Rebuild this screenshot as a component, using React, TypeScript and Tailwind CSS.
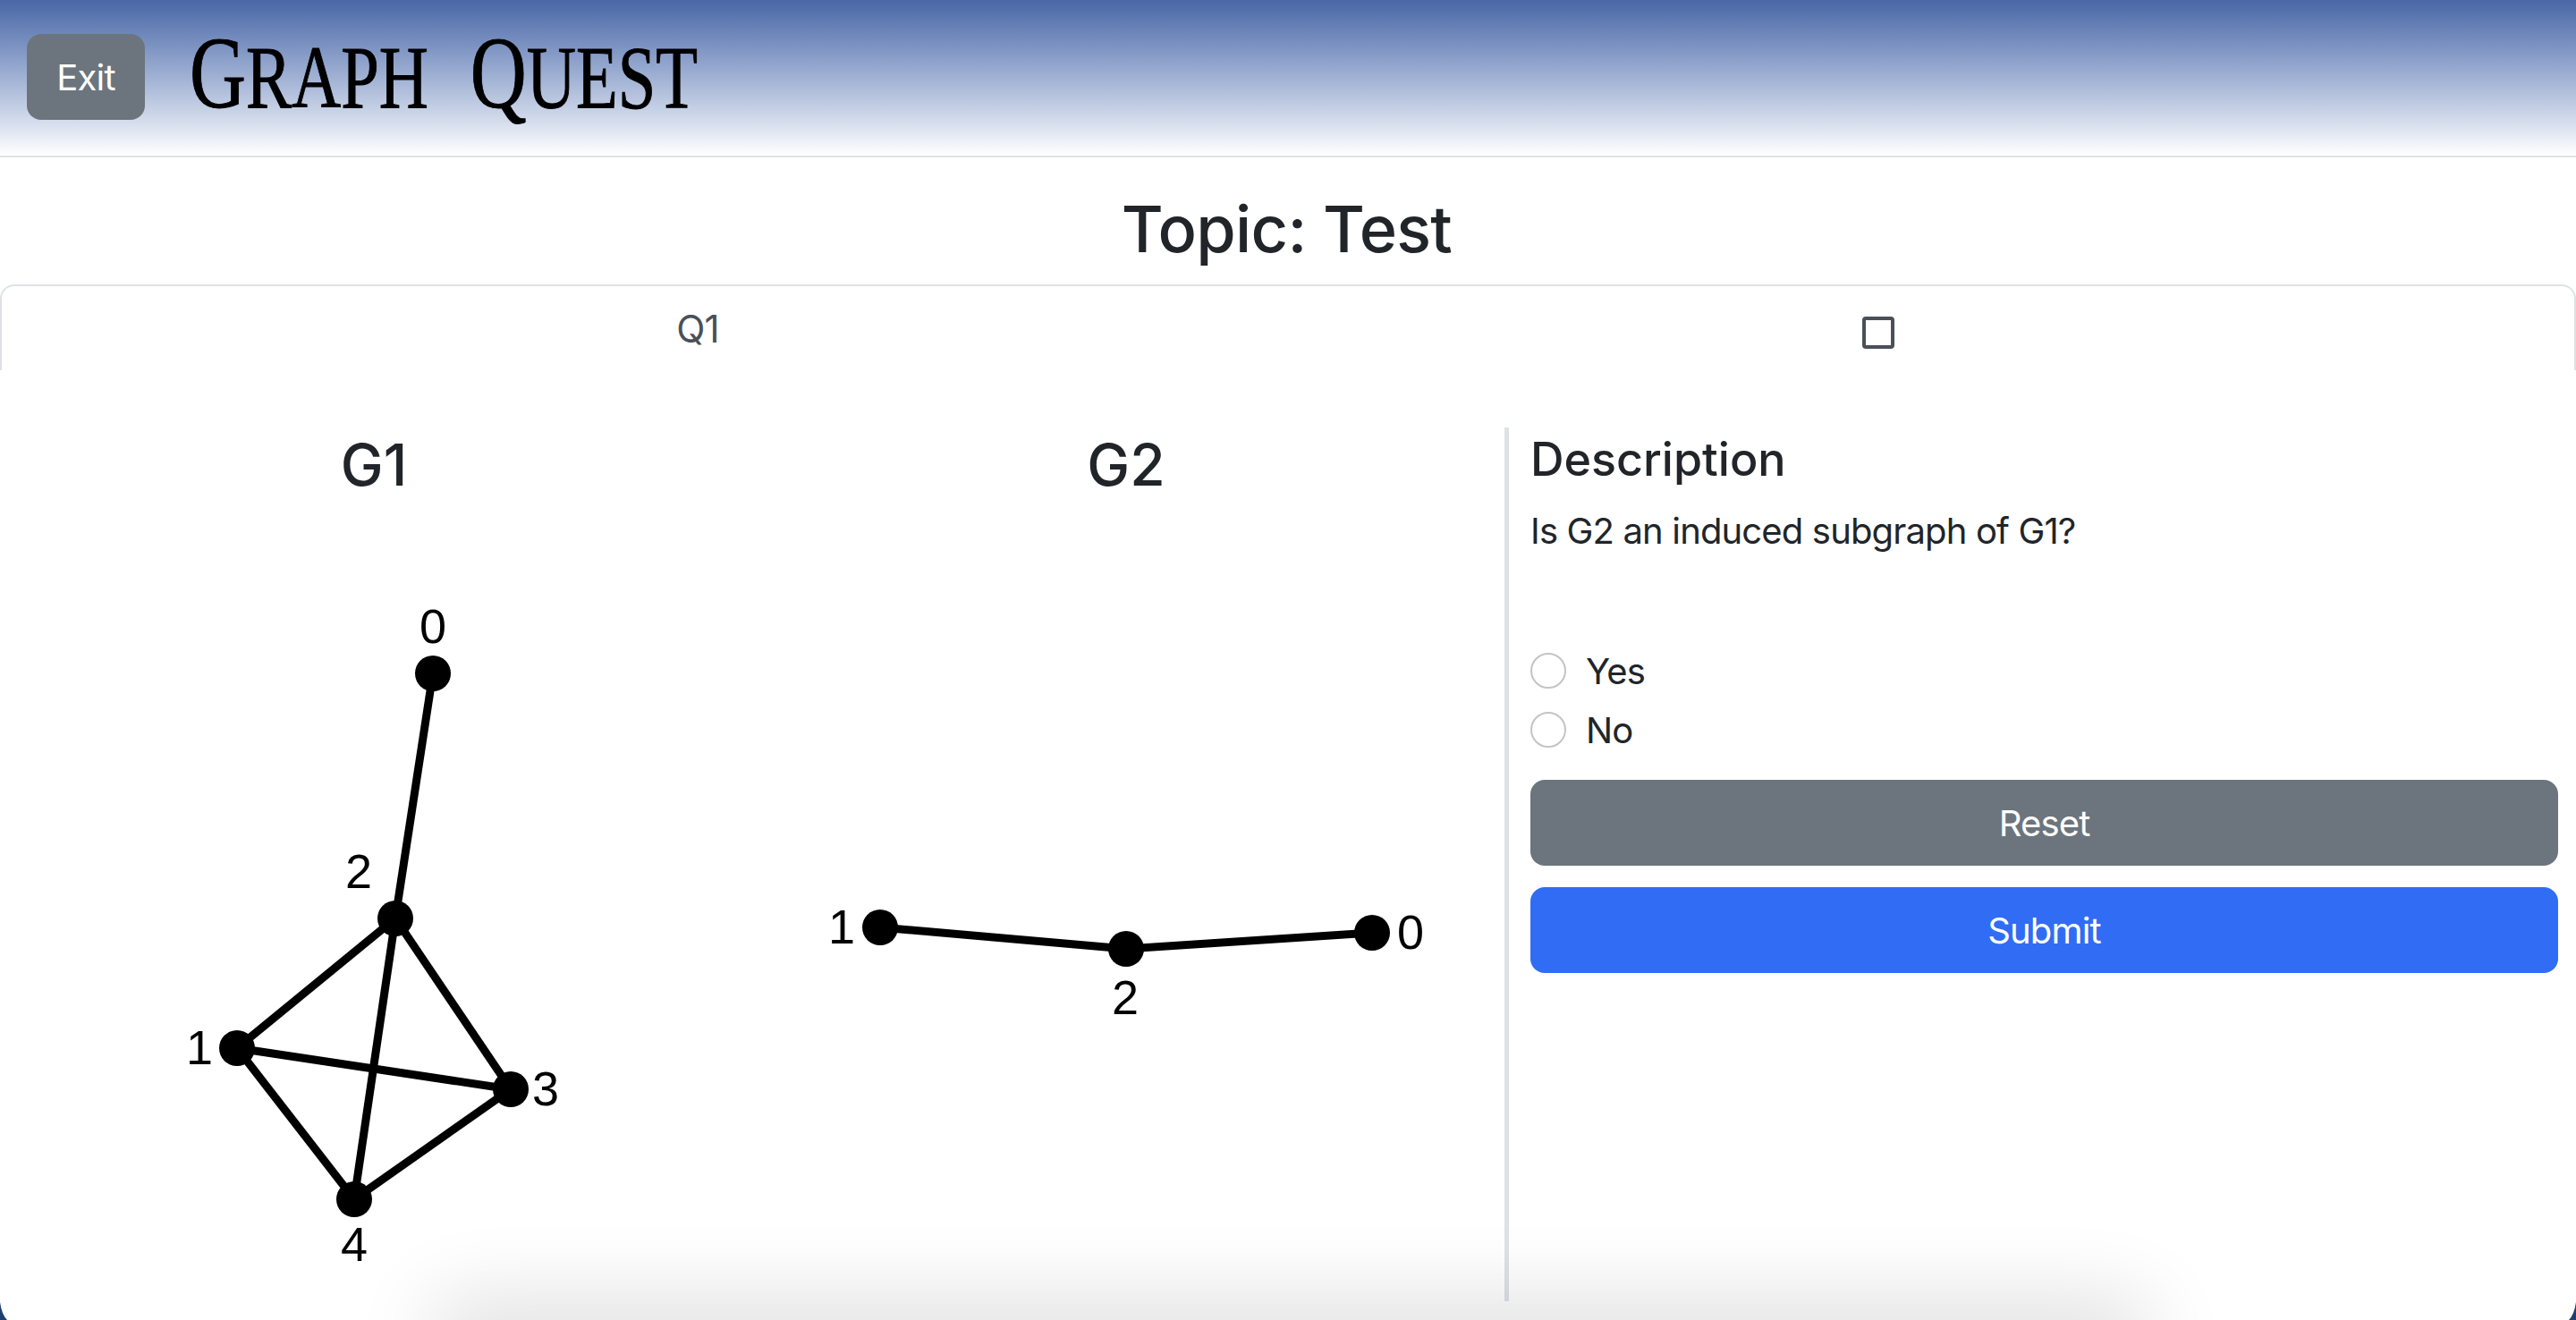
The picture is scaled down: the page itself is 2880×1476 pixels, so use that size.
const sans = "font-['Inter','Noto_Sans',sans-serif]";

type Node = { id: number; x: number; y: number; lx: number; ly: number };

// coordinates are in page pixels, the viewBox of each graph is offset to match
const g1Nodes: Node[] = [
  { id: 0, x: 482, y: 753, lx: 482, ly: 700 },
  { id: 1, x: 263, y: 1172, lx: 221, ly: 1171 },
  { id: 2, x: 440, y: 1027, lx: 399, ly: 974 },
  { id: 3, x: 569, y: 1218, lx: 608, ly: 1217 },
  { id: 4, x: 394, y: 1341, lx: 394, ly: 1391 },
];
const g1Edges = [[0, 2], [2, 1], [2, 3], [2, 4], [1, 3], [1, 4], [3, 4]];

const g2Nodes: Node[] = [
  { id: 0, x: 1534, y: 1043, lx: 1577, ly: 1042 },
  { id: 1, x: 984, y: 1037, lx: 941, ly: 1036 },
  { id: 2, x: 1259, y: 1061, lx: 1258, ly: 1115 },
];
const g2Edges = [[1, 2], [2, 0]];

function Graph({ title, nodes, edges, left }: { title: string; nodes: Node[]; edges: number[][]; left: number }) {
  const pos = (id: number) => nodes.find((n) => n.id === id)!;
  return (
    <div className="w-[841px] flex flex-col items-center">
      <h3 className={`${sans} text-[64px] leading-[72px] font-medium text-[#212529] mt-[70px] -ml-[5px]`}>{title}</h3>
      <svg className="w-[841px] h-[880px]" viewBox={`${left} 556 841 880`}>
        {edges.map(([a, b]) => (
          <line key={`${a}-${b}`} x1={pos(a).x} y1={pos(a).y} x2={pos(b).x} y2={pos(b).y} stroke="#000" strokeWidth={9} />
        ))}
        {nodes.map((n) => (
          <g key={n.id}>
            <circle cx={n.x} cy={n.y} r={20} fill="#000" />
            <text x={n.lx} y={n.ly} dy="0.36em" textAnchor="middle" fontSize={54} fontFamily="Liberation Sans" fill="#000">
              {n.id}
            </text>
          </g>
        ))}
      </svg>
    </div>
  );
}

function Radio({ label }: { label: string }) {
  return (
    <label className="flex items-center gap-[22px] h-[66px]">
      <span className="w-10 h-10 rounded-full border-2 border-[#c4c4c4] bg-white" />
      <span className={`${sans} text-[40px] tracking-[-0.85px] text-[#212529] pt-[2px]`}>{label}</span>
    </label>
  );
}

export default function App() {
  return (
    <div className="relative w-[2880px] h-[1476px] overflow-hidden bg-white">
      <header className="h-[176px] flex items-center border-b-2 border-[#dee2e6] bg-gradient-to-b from-[#4a67a6] to-white pl-[30px]">
        <button className={`${sans} w-[132px] h-[96px] rounded-2xl bg-[#6c757d] text-white text-[40px] tracking-[-0.85px] mb-[2px] pt-[2px]`}>Exit</button>
        <div className="ml-[50px] w-[570px] origin-left scale-x-[0.765] whitespace-nowrap text-black font-['Liberation_Serif',serif] leading-none mb-[10px] [-webkit-text-stroke:1px_black]">
          <span className="text-[114px]">G</span>
          <span className="text-[100px]">RAPH</span>
          <span className="text-[100px] ml-[36px]"> </span>
          <span className="text-[114px]">Q</span>
          <span className="text-[100px]">UEST</span>
        </div>
      </header>

      <h1 className={`${sans} text-center text-[72px] tracking-[-0.7px] leading-[86px] font-medium text-[#212529] mt-[37px] pr-[3px]`}>Topic: Test</h1>

      <div className="mt-[19px] h-[100px] flex rounded-t-2xl border-2 border-b-0 border-[#dee2e6]">
        <div className={`${sans} w-[1556px] text-center text-[42px] tracking-[-0.85px] leading-[56px] text-[#495057] pt-[20px]`}>Q1</div>
        <div className="flex-1 pt-[34px] pl-[524px]">
          <div className="w-9 h-9 rounded-[4px] border-4 border-[#495057]" />
        </div>
      </div>

      <main className="relative -mt-[4px] flex bg-white h-[1060px]">
        <Graph title="G1" nodes={g1Nodes} edges={g1Edges} left={-2} />
        <Graph title="G2" nodes={g2Nodes} edges={g2Edges} left={841} />
        <section className="mt-[64px] h-[977px] w-[1198px] border-l-[5px] border-[#dee2e6] pl-[24px] pr-[20px]">
          <h4 className={`${sans} text-[52px] leading-[62px] font-medium text-[#212529] mt-[5px]`}>Description</h4>
          <p className={`${sans} text-[40px] tracking-[-0.85px] leading-[60px] text-[#212529] mt-[19px]`}>Is G2 an induced subgraph of G1?</p>
          <div className="mt-[93px]">
            <Radio label="Yes" />
            <Radio label="No" />
          </div>
          <button className={`${sans} block w-full h-[96px] mt-[23px] pt-[2px] rounded-2xl bg-[#6c757d] text-white text-[40px] tracking-[-0.85px]`}>Reset</button>
          <button className={`${sans} block w-full h-[96px] mt-[24px] pt-[2px] rounded-2xl bg-[#316cf4] text-white text-[40px] tracking-[-0.85px]`}>Submit</button>
        </section>
      </main>

      {/* soft shadow of something sitting just below the fold */}
      <div className="absolute left-[507px] top-[1476px] w-[1872px] h-10 shadow-[0_0_92px_20px_rgba(0,0,0,0.14)]" />

      {/* window corners */}
      <svg className="absolute left-0 bottom-0 w-2 h-5" viewBox="0 0 8 20">
        <path d="M0 0Q2 14 8 20L0 20Z" fill="#1f3f6e" />
      </svg>
      <svg className="absolute right-0 bottom-0 w-2 h-5" viewBox="0 0 8 20">
        <path d="M8 0Q6 14 0 20L8 20Z" fill="#1f3f6e" />
      </svg>
    </div>
  );
}
